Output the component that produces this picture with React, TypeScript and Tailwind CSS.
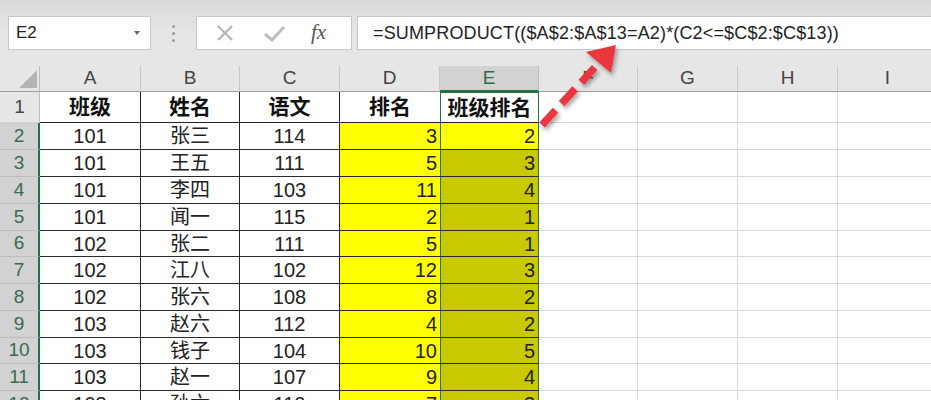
import React from "react";

const F = { fontFamily: '"Liberation Sans", "Noto Sans CJK SC", sans-serif' };

const cols = [
  { k: "A", w: "w-[101px]" },
  { k: "B", w: "w-[99px]" },
  { k: "C", w: "w-[100px]" },
  { k: "D", w: "w-[100px]" },
  { k: "E", w: "w-[99px]" },
  { k: "F", w: "w-[99px]" },
  { k: "G", w: "w-[100px]" },
  { k: "H", w: "w-[100px]" },
  { k: "I", w: "w-[100px]" },
];

const data: [string, string, string, string, string][] = [
  ["101", "张三", "114", "3", "2"],
  ["101", "王五", "111", "5", "3"],
  ["101", "李四", "103", "11", "4"],
  ["101", "闻一", "115", "2", "1"],
  ["102", "张二", "111", "5", "1"],
  ["102", "江八", "102", "12", "3"],
  ["102", "张六", "108", "8", "2"],
  ["103", "赵六", "112", "4", "2"],
  ["103", "钱子", "104", "10", "5"],
  ["103", "赵一", "107", "9", "4"],
  ["103", "孙六", "110", "7", "3"],
];

const heights = ["h-[27px]", "h-[27px]", "h-[27px]", "h-[27px]", "h-[26px]", "h-[27px]", "h-[27px]", "h-[27px]", "h-[26px]", "h-[27px]", "h-[27px]"];

export default function App() {
  return (
    <div className="relative w-[931px] h-[400px] overflow-hidden bg-white" style={F}>
      {/* Formula bar */}
      <div className="h-[66px] bg-gradient-to-b from-[#d9d9d9] via-[#e6e6e6] to-[#e6e6e6] flex items-start pt-[16px] pl-[8px]">
        <div className="w-[143px] shrink-0 h-[34px] bg-white border border-[#c8c8c8] flex items-center pl-[7px] pr-[10px] justify-between">
          <span className="text-[17px] text-[#222]">E2</span>
          <span className="w-0 h-0 border-l-[3px] border-r-[3px] border-t-[4px] border-l-transparent border-r-transparent border-t-[#666]"></span>
        </div>
        <div className="w-[45px] shrink-0 h-[34px] flex flex-col items-center justify-center gap-[4px]">
          <span className="w-[3px] h-[3px] rounded-full bg-[#9a9a9a]"></span>
          <span className="w-[3px] h-[3px] rounded-full bg-[#9a9a9a]"></span>
          <span className="w-[3px] h-[3px] rounded-full bg-[#9a9a9a]"></span>
        </div>
        <div className="w-[156px] shrink-0 h-[34px] bg-white border border-[#c8c8c8] flex items-center">
          <svg width="50" height="34" viewBox="0 0 50 34" className="ml-[2px]">
            <path d="M19 10 L33 24 M33 10 L19 24" stroke="#b4b4b4" strokeWidth="2.2" fill="none" />
          </svg>
          <svg width="50" height="34" viewBox="0 0 50 34">
            <path d="M16 18 L23 24 L35 11" stroke="#bdbdbd" strokeWidth="3" fill="none" />
          </svg>
          <span className="ml-[12px] text-[21px] italic text-[#555]" style={{ fontFamily: '"Liberation Serif", serif' }}>fx</span>
        </div>
        <div className="ml-[5px] flex-1 h-[34px] bg-white border border-[#c8c8c8] border-r-0 flex items-center pl-[15px]">
          <span className="text-[18px] text-[#222] tracking-[0.15px] whitespace-nowrap">=SUMPRODUCT(($A$2:$A$13=A2)*(C2&lt;=$C$2:$C$13))</span>
        </div>
      </div>

      {/* Column header row */}
      <div className="flex h-[26px] bg-[#e6e6e6]">
        <div className="w-[40px] shrink-0 h-full border-r border-[#bdbdbd] border-b border-b-[#9e9e9e] relative">
          <svg width="40" height="26" viewBox="0 0 40 26" className="absolute inset-0">
            <polygon points="37,4 37,22 19,22" fill="#b5b5b5" />
          </svg>
        </div>
        {cols.map((c) => (
          <div
            key={c.k}
            className={`${c.w} shrink-0 h-full flex items-center justify-center text-[19px] ${
              c.k === "E"
                ? "bg-[#d2d2d2] text-[#2f6b45] border-r border-[#bdbdbd] border-b-2 border-b-[#217346]"
                : "text-[#444] border-r border-[#c8c8c8] border-b border-b-[#9e9e9e]"
            }`}
          >
            {c.k}
          </div>
        ))}
      </div>

      {/* Row 1 */}
      <div className="flex h-[31px]">
        <div className="w-[40px] shrink-0 h-full bg-[#e6e6e6] border-r border-[#bdbdbd] border-b border-b-[#d0d0d0] flex items-end justify-center pb-[1px] text-[19px] text-[#444]">1</div>
        {["班级", "姓名", "语文", "排名", "班级排名"].map((t, i) => (
          <div
            key={i}
            className={`${cols[i].w} shrink-0 h-full flex items-center justify-center text-[21px] font-bold text-[#111] border-b border-[#222] ${
              i === 3 ? "border-r-0" : i === 4 ? "border-x border-x-[#217346] border-t border-t-[#217346]" : "border-r border-r-[#222]"
            }`}
          >
            {t}
          </div>
        ))}
        {cols.slice(5).map((c) => (
          <div key={c.k} className={`${c.w} shrink-0 h-full border-r border-b border-[#d9d9d9]`}></div>
        ))}
      </div>

      {/* Data rows */}
      {data.map((r, ri) => (
        <div key={ri} className={`flex ${heights[ri]}`}>
          <div className="w-[40px] shrink-0 h-full bg-[#d2d2d2] border-r-2 border-[#217346] border-b border-b-[#bcbcbc] flex items-center justify-center text-[19px] text-[#3b6b4e]">
            {ri + 2}
          </div>
          <div className={`${cols[0].w} shrink-0 h-full flex items-center justify-center text-[20px] text-[#222] border-r border-b border-[#2a2a2a]`}>{r[0]}</div>
          <div className={`${cols[1].w} shrink-0 h-full flex items-center justify-center text-[20px] text-[#222] border-r border-b border-[#2a2a2a]`}>{r[1]}</div>
          <div className={`${cols[2].w} shrink-0 h-full flex items-center justify-center text-[20px] text-[#222] border-r border-b border-[#2a2a2a]`}>{r[2]}</div>
          <div className={`${cols[3].w} shrink-0 h-full flex items-center justify-end pr-[3px] text-[20px] text-[#222] bg-[#ffff00] border-b border-[#2a2a2a]`}>{r[3]}</div>
          <div
            className={`${cols[4].w} shrink-0 h-full flex items-center justify-end pr-[3px] text-[20px] text-[#222] border-x border-x-[#217346] border-b border-b-[#2a2a2a] ${
              ri === 0 ? "bg-[#ffff00]" : "bg-[#c9c900]"
            }`}
          >
            {r[4]}
          </div>
          {cols.slice(5).map((c) => (
            <div key={c.k} className={`${c.w} shrink-0 h-full border-r border-b border-[#d9d9d9]`}></div>
          ))}
        </div>
      ))}

      {/* Red dashed arrow overlay */}
      <svg className="absolute inset-0 pointer-events-none" width="931" height="400" viewBox="0 0 931 400">
        <defs>
          <filter id="sh" x="-20%" y="-20%" width="140%" height="140%">
            <feDropShadow dx="2" dy="3" stdDeviation="2" floodColor="#000" floodOpacity="0.35" />
          </filter>
        </defs>
        <g filter="url(#sh)">
          <line x1="542" y1="125" x2="597" y2="65" stroke="#e8393c" strokeWidth="7.5" strokeDasharray="20 9" />
          <polygon points="616,45 611,73 586,52" fill="#e8393c" />
        </g>
      </svg>
    </div>
  );
}
